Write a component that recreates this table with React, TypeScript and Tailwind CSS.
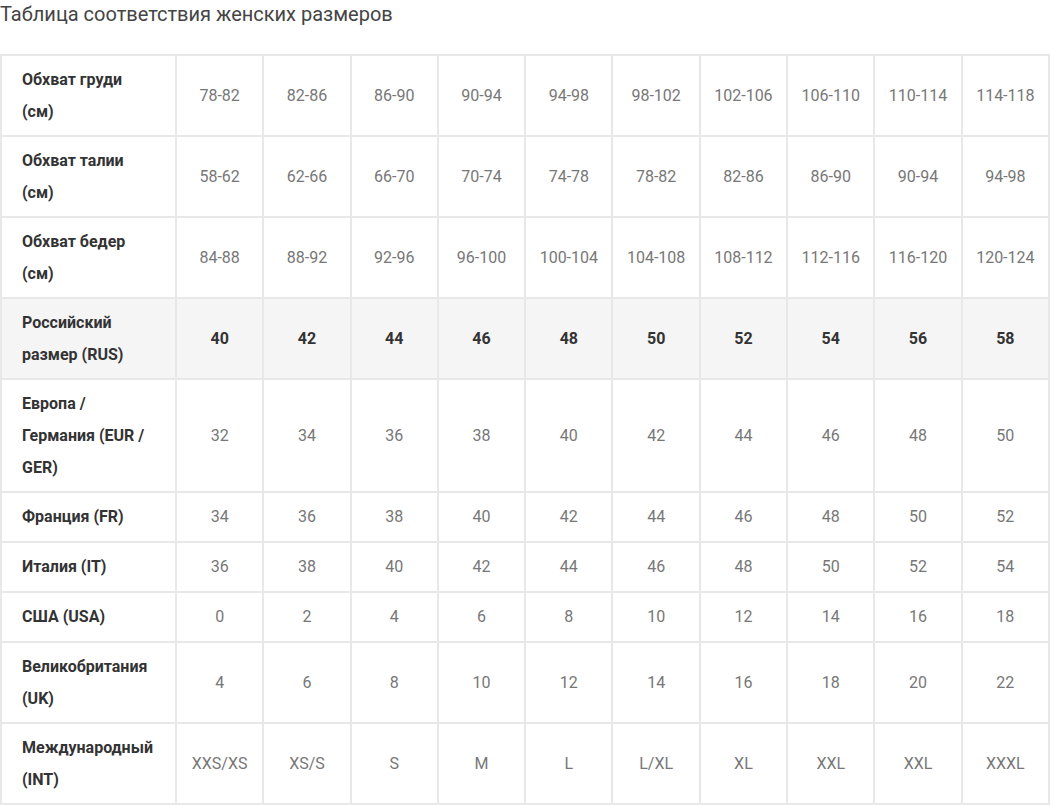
const sizes = [
  { label: ["Обхват груди", "(см)"], values: ["78-82", "82-86", "86-90", "90-94", "94-98", "98-102", "102-106", "106-110", "110-114", "114-118"], h: "h-[81px]" },
  { label: ["Обхват талии", "(см)"], values: ["58-62", "62-66", "66-70", "70-74", "74-78", "78-82", "82-86", "86-90", "90-94", "94-98"], h: "h-[81px]" },
  { label: ["Обхват бедер", "(см)"], values: ["84-88", "88-92", "92-96", "96-100", "100-104", "104-108", "108-112", "112-116", "116-120", "120-124"], h: "h-[81px]" },
  { label: ["Российский", "размер (RUS)"], values: ["40", "42", "44", "46", "48", "50", "52", "54", "56", "58"], h: "h-[81px]", main: true },
  { label: ["Европа /", "Германия (EUR /", "GER)"], values: ["32", "34", "36", "38", "40", "42", "44", "46", "48", "50"], h: "h-[113px]" },
  { label: ["Франция (FR)"], values: ["34", "36", "38", "40", "42", "44", "46", "48", "50", "52"], h: "h-[50px]" },
  { label: ["Италия (IT)"], values: ["36", "38", "40", "42", "44", "46", "48", "50", "52", "54"], h: "h-[50px]" },
  { label: ["США (USA)"], values: ["0", "2", "4", "6", "8", "10", "12", "14", "16", "18"], h: "h-[50px]" },
  { label: ["Великобритания", "(UK)"], values: ["4", "6", "8", "10", "12", "14", "16", "18", "20", "22"], h: "h-[81px]" },
  { label: ["Международный", "(INT)"], values: ["XXS/XS", "XS/S", "S", "M", "L", "L/XL", "XL", "XXL", "XXL", "XXXL"], h: "h-[81px]" },
];

export default function App() {
  return (
    <div className="min-h-screen bg-white font-['Roboto',sans-serif]">
      {/* page heading */}
      <h2 className="text-[20px] leading-[28px] text-[#444] pb-[26px]">
        Таблица соответствия женских размеров
      </h2>

      {/* size chart */}
      <table className="w-[1050px] table-fixed border-collapse border-2 border-[#e8e8e8]">
        <colgroup>
          <col className="w-[175px]" />
          {sizes[0].values.map((_, i) => (
            <col key={i} />
          ))}
        </colgroup>
        <tbody>
          {sizes.map((row, r) => (
            <tr key={r} className={row.main ? "bg-[#f5f5f5]" : ""}>
              <td className={`${row.h} border-2 border-[#e8e8e8] pl-[20px] pr-2 text-[16px] leading-8 font-bold text-[#333]`}>
                {row.label.map((line, i) => (
                  <div key={i}>{line}</div>
                ))}
              </td>
              {row.values.map((v, i) => (
                <td
                  key={i}
                  className={`border-2 border-[#e8e8e8] text-center text-[16px] ${
                    row.main ? "font-bold text-[#333]" : "text-[#777]"
                  }`}
                >
                  {v}
                </td>
              ))}
            </tr>
          ))}
        </tbody>
      </table>
    </div>
  );
}
